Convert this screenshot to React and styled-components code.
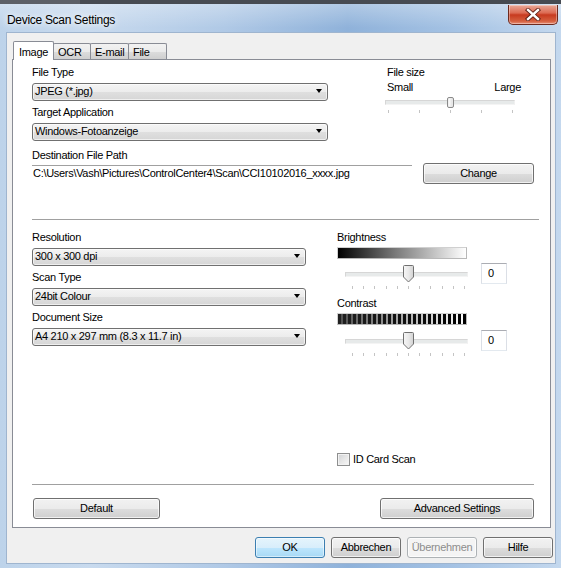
import React from 'react';
import styled, { createGlobalStyle } from 'styled-components';

const Global = createGlobalStyle`
  html, body { margin: 0; padding: 0; }
  body {
    width: 561px; height: 568px; overflow: hidden;
    font-family: "Liberation Sans", Arial, sans-serif;
    font-size: 11px; letter-spacing: -0.3px; color: #000;
  }
  * { box-sizing: border-box; }
`;

const Window = styled.div`
  width: 561px; height: 568px;
  display: flex; flex-direction: column;
  background:
    linear-gradient(180deg, rgba(255,255,255,0.35), rgba(255,255,255,0) 28px),
    linear-gradient(90deg, #bdd3ea 0%, #c8daee 16%, #b0c9e6 40%, #8fb2da 62%, #a3c1e3 80%, #c4d8ee 100%);
`;

const TopStrip = styled.div`
  flex: none; height: 4px;
  background: linear-gradient(90deg, #5c6067 0 80px, #474b52 80px);
`;

const TitleBar = styled.div`
  flex: none; height: 29px;
  display: flex; align-items: flex-start;
`;

const Title = styled.div`
  margin: 8px 0 0 7px;
  font-family: "Liberation Sans", Arial, sans-serif;
  font-size: 12px; line-height: 16px; letter-spacing: -0.3px; color: #000;
  text-shadow: 0 0 6px #fff, 0 0 10px rgba(255,255,255,0.8);
`;

const CloseButton = styled.div`
  margin: 1px 3px 0 auto;
  width: 50px; height: 20px;
  border: 1px solid #6e2a1e; border-top: none;
  border-radius: 0 0 5px 5px;
  background: linear-gradient(180deg, #e9a998 0%, #dc6a52 42%, #c73a1f 52%, #d5603f 85%, #e8927a 100%);
  box-shadow: inset 0 0 0 1px rgba(255,255,255,0.35);
  display: flex; align-items: center; justify-content: center;
`;

const Client = styled.div`
  flex: 1;
  margin: 0 6px 5px 7px;
  background: #f0f0f0;
  box-shadow: 0 0 0 1px #9fb5cf;
  display: flex; flex-direction: column;
  padding: 8px 0 0 5px;
`;

const TabRow = styled.div`
  display: flex; align-items: flex-start;
  height: 19px; margin-left: 1px;
  position: relative; z-index: 1;
`;

const Tab = styled.div`
  width: ${p => p.$w}px;
  height: ${p => (p.$active ? 19 : 16)}px;
  margin-top: ${p => (p.$active ? 0 : 2)}px;
  margin-left: ${p => (p.$first ? 0 : -1)}px;
  border: 1px solid #898c95; border-bottom: none;
  border-radius: 2px 2px 0 0;
  background: ${p => (p.$active ? '#fff' : 'linear-gradient(180deg, #f2f2f2 0%, #ebebeb 50%, #dddddd 51%, #cfcfcf 100%)')};
  padding: ${p => (p.$active ? '4px 0 0 5px' : '2px 0 0 4px')};
  line-height: 13px;
  position: relative; z-index: ${p => (p.$active ? 2 : 1)};
`;

const Panel = styled.div`
  margin-top: -1px;
  width: 539px; height: 469px;
  border: 1px solid #898c95;
  background: #fff;
  display: flex; flex-direction: column;
  padding: 6px 0 8px 19px;
`;

const TopSection = styled.div`
  display: flex; gap: 59px;
`;

const Column = styled.div`
  width: ${p => p.$w}px;
  display: flex; flex-direction: column;
`;

const Label = styled.div`
  line-height: 13px; height: 13px;
  margin-top: ${p => p.$mt || 0}px;
  white-space: nowrap;
`;

const Select = styled.div`
  margin: 4px 0 5px;
  height: 18px;
  border: 1px solid #707070; border-radius: 3px;
  background: linear-gradient(180deg, #f4f4f4 0%, #ececec 50%, #dfdfdf 51%, #d6d6d6 100%);
  box-shadow: inset 0 0 0 1px rgba(255,255,255,0.6);
  display: flex; align-items: center; justify-content: space-between;
  padding: 0 5px 1px 2px;
  line-height: 13px;
  &::after {
    content: ''; width: 0; height: 0;
    border-left: 3.5px solid transparent; border-right: 3.5px solid transparent;
    border-top: 4px solid #000;
    margin-bottom: 1px;
  }
`;

const SizeLabels = styled.div`
  display: flex; justify-content: space-between;
  margin-top: 2px; line-height: 13px;
`;

const SliderBox = styled.div`
  position: relative;
  width: ${p => p.$w}px; height: ${p => p.$h}px;
  margin-left: ${p => p.$ml || 0}px;
  margin-top: ${p => p.$mt || 0}px;
  &::before {
    content: ''; position: absolute; left: 0; right: 0;
    top: ${p => p.$trackTop}px; height: 3px;
    border: 1px solid #d6d6d6; border-bottom-color: #f4f4f4; border-right-color: #f0f0f0;
    background: #e7eaea;
  }
`;

const ThumbWrap = styled.div`
  position: absolute; top: ${p => p.$top}px; left: ${p => p.$left}px;
  display: flex;
`;

const Ticks = styled.div`
  display: flex; justify-content: space-between;
  width: ${p => p.$w}px;
  margin-left: ${p => p.$ml}px;
  margin-top: ${p => p.$mt}px;
`;

const Tick = styled.span`
  width: 1px; height: 3px; background: #c4c4c4;
`;

const Destination = styled.div`
  margin-top: 3px;
  display: flex; flex-direction: column;
`;

const PathRow = styled.div`
  display: flex; align-items: flex-start;
  margin-top: 1px;
`;

const PathField = styled.div`
  width: 380px; margin-top: 2px;
  border-top: 1px solid #a0a0a0;
  padding: 0 1px; line-height: 14px;
  white-space: nowrap; overflow: hidden;
`;

const Button = styled.div`
  width: ${p => p.$w}px; height: 21px;
  margin-left: ${p => p.$ml || 0}px;
  border: 1px solid ${p => (p.$default ? '#3c7fb1' : p.$disabled ? '#adb2b5' : '#707070')};
  border-radius: 3px;
  background: ${p => (p.$default
    ? 'linear-gradient(180deg, #e5f4fc 0%, #d8eefb 50%, #bee6fd 51%, #a7d9f5 100%)'
    : p.$disabled
      ? '#f4f4f4'
      : 'linear-gradient(180deg, #f2f2f2 0%, #ebebeb 50%, #dddddd 51%, #cfcfcf 100%)')};
  box-shadow: inset 0 0 0 1px ${p => (p.$default ? 'rgba(255,255,255,0.5)' : 'rgba(255,255,255,0.7)')};
  color: ${p => (p.$disabled ? '#8d8d8d' : '#000')};
  display: flex; align-items: center; justify-content: center;
  line-height: 13px; white-space: nowrap;
`;

const Separator = styled.div`
  flex: none; height: 1px; background: #a0a0a0;
  margin-top: ${p => p.$mt}px;
  margin-right: ${p => p.$mr}px;
`;

const LowerSection = styled.div`
  flex: 1; margin-top: 11px;
  display: flex; gap: 31px;
`;

const RightLower = styled.div`
  width: 175px;
  display: flex; flex-direction: column;
`;

const GradientBar = styled.div`
  width: 130px; height: 12px; margin-top: 3px;
  border: 1px solid #b8b8b8; border-top-color: #d0d0d0; border-left-color: #d0d0d0;
  background: linear-gradient(90deg, #000 0%, #7a7a7a 45%, #fff 100%);
`;

const StripeBar = styled.div`
  width: 130px; height: 12px; margin-top: 3px;
  border: 1px solid #b8b8b8; border-top-color: #d0d0d0; border-left-color: #d0d0d0;
  background:
    linear-gradient(90deg, rgba(40,40,40,0.82), rgba(40,40,40,0.35) 55%, rgba(40,40,40,0)),
    repeating-linear-gradient(90deg, #000 0 3px, #fff 3px 5px);
`;

const SliderRow = styled.div`
  display: flex; align-items: flex-start;
  margin-top: ${p => p.$mt}px;
  height: 21px;
`;

const EditBox = styled.div`
  width: 26px; height: 21px; margin-left: 13px;
  border: 1px solid #dbdfe6; border-top-color: #abadb3; border-bottom-color: #e3e9ef;
  background: #fff;
  padding: 3px 0 0 6px; line-height: 13px;
`;

const CheckRow = styled.div`
  margin-top: auto; margin-bottom: 18px;
  display: flex; align-items: center; gap: 3px;
  height: 13px; line-height: 13px;
`;

const CheckBox = styled.div`
  width: 13px; height: 13px;
  border: 1px solid #8e8f8f;
  background: linear-gradient(135deg, #cfd1d4 0%, #e8e8e8 55%, #f8f8f8 100%);
  box-shadow: inset 0 0 0 1px #f2f2f2;
`;

const BottomButtons = styled.div`
  margin-top: 13px;
  display: flex; justify-content: space-between;
  padding: 0 16px 0 1px;
`;

const DialogButtons = styled.div`
  margin-top: 9px;
  display: flex; justify-content: flex-end; gap: 6px;
  margin-right: 2px;
`;

const BigThumb = () => (
  <svg width="11" height="18" viewBox="0 0 11 18">
    <defs>
      <linearGradient id="tg" x1="0" y1="0" x2="1" y2="0">
        <stop offset="0" stopColor="#f6f6f6" />
        <stop offset="0.5" stopColor="#e9e9e9" />
        <stop offset="1" stopColor="#d2d2d2" />
      </linearGradient>
    </defs>
    <path d="M1.5 0.5 H9.5 Q10.5 0.5 10.5 1.5 V12 L5.5 17 L0.5 12 V1.5 Q0.5 0.5 1.5 0.5 Z" fill="url(#tg)" stroke="#707070" />
  </svg>
);

const SmallThumb = () => (
  <svg width="7" height="11" viewBox="0 0 7 11">
    <rect x="0.5" y="0.5" width="6" height="10" rx="1.5" fill="#e8e8e8" stroke="#8a8a8a" />
    <rect x="1.5" y="1.5" width="2" height="8" fill="#f8f8f8" />
  </svg>
);

const CloseX = () => (
  <svg width="16" height="13" viewBox="0 0 16 13">
    <path d="M3 2 L13 11 M13 2 L3 11" stroke="#5b1e14" strokeWidth="4.2" strokeLinecap="square" />
    <path d="M3 2 L13 11 M13 2 L3 11" stroke="#fff" strokeWidth="2.4" strokeLinecap="square" />
  </svg>
);

const tickList = n => Array.from({ length: n }, (_, i) => <Tick key={i} />);

const Field = ({ label, value, mt }) => (
  <>
    <Label $mt={mt}>{label}</Label>
    <Select>{value}</Select>
  </>
);

const ValueSlider = ({ mt }) => (
  <SliderRow $mt={mt}>
    <SliderBox $w={123} $h={21} $ml={8} $trackTop={9}>
      <ThumbWrap $top={2} $left={58}><BigThumb /></ThumbWrap>
    </SliderBox>
    <EditBox>0</EditBox>
  </SliderRow>
);

export default function App() {
  return (
    <Window>
      <Global />
      <TopStrip />
      <TitleBar>
        <Title>Device Scan Settings</Title>
        <CloseButton><CloseX /></CloseButton>
      </TitleBar>
      <Client>
        <TabRow>
          <Tab $active $first $w={41}>Image</Tab>
          <Tab $w={38}>OCR</Tab>
          <Tab $w={39}>E-mail</Tab>
          <Tab $w={39}>File</Tab>
        </TabRow>
        <Panel>
          <TopSection>
            <Column $w={296}>
              <Field label="File Type" value="JPEG (*.jpg)" />
              <Field label="Target Application" value="Windows-Fotoanzeige" />
            </Column>
            <Column $w={134}>
              <Label>File size</Label>
              <SizeLabels><span>Small</span><span>Large</span></SizeLabels>
              <SliderBox $w={130} $h={12} $ml={-2} $mt={2} $trackTop={4}>
                <ThumbWrap $top={1} $left={62}><SmallThumb /></ThumbWrap>
              </SliderBox>
              <Ticks $w={125} $ml={1} $mt={2}>{tickList(5)}</Ticks>
            </Column>
          </TopSection>
          <Destination>
            <Label>Destination File Path</Label>
            <PathRow>
              <PathField>C:\Users\Vash\Pictures\ControlCenter4\Scan\CCI10102016_xxxx.jpg</PathField>
              <Button $w={111} $ml={11}>Change</Button>
            </PathRow>
          </Destination>
          <Separator $mt={35} $mr={11} />
          <LowerSection>
            <Column $w={274}>
              <Field label="Resolution" value="300 x 300 dpi" />
              <Field label="Scan Type" value="24bit Colour" />
              <Field label="Document Size" value="A4 210 x 297 mm (8.3 x 11.7 in)" />
            </Column>
            <RightLower>
              <Label>Brightness</Label>
              <GradientBar />
              <ValueSlider mt={4} />
              <Ticks $w={113} $ml={15} $mt={2}>{tickList(11)}</Ticks>
              <Label $mt={8}>Contrast</Label>
              <StripeBar />
              <ValueSlider mt={5} />
              <Ticks $w={113} $ml={15} $mt={2}>{tickList(11)}</Ticks>
              <CheckRow>
                <CheckBox />
                <span>ID Card Scan</span>
              </CheckRow>
            </RightLower>
          </LowerSection>
          <Separator $mt={0} $mr={16} />
          <BottomButtons>
            <Button $w={127}>Default</Button>
            <Button $w={154}>Advanced Settings</Button>
          </BottomButtons>
        </Panel>
        <DialogButtons>
          <Button $w={70} $default>OK</Button>
          <Button $w={70}>Abbrechen</Button>
          <Button $w={70} $disabled>Übernehmen</Button>
          <Button $w={70}>Hilfe</Button>
        </DialogButtons>
      </Client>
    </Window>
  );
}
